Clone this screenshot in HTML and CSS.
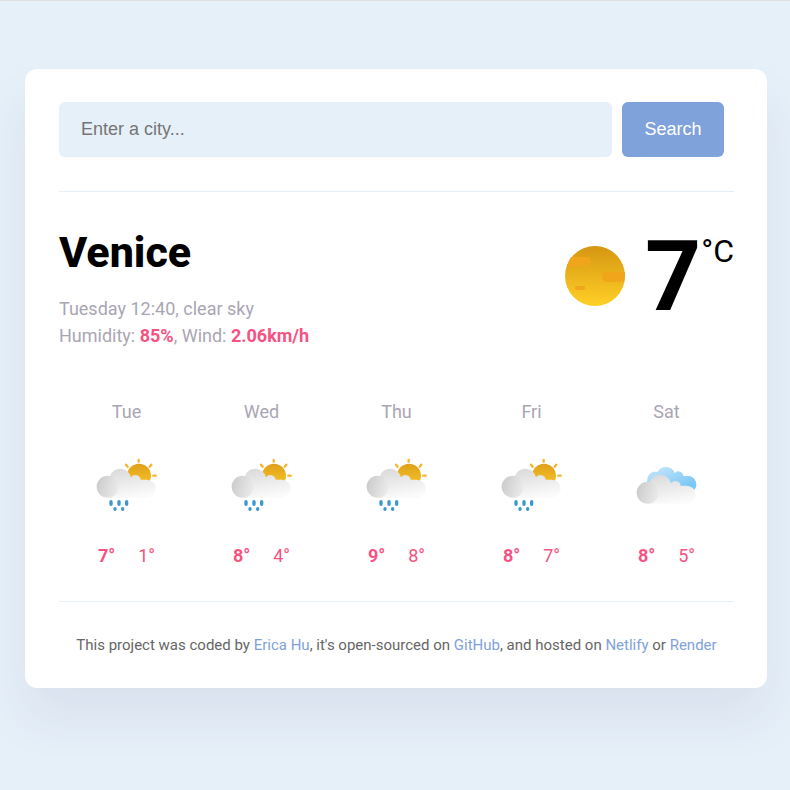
FILE: index.html
```html
<!DOCTYPE html>
<html lang="en">
<head>
    <meta charset="UTF-8">
    <meta name="viewport" content="width=device-width, initial-scale=1.0">
    <title>Weather App</title>
    <link rel="stylesheet" href="styles.css">
</head>
<body>
    <!-- Shared icons -->
    <svg class="icon-defs" aria-hidden="true">
        <defs>
            <linearGradient id="sunFill" x1="0" y1="0" x2="0" y2="1">
                <stop offset="0" stop-color="#d69612"/>
                <stop offset="1" stop-color="#ffd026"/>
            </linearGradient>
            <linearGradient id="smallSunFill" x1="0" y1="0" x2="0" y2="1">
                <stop offset="0" stop-color="#dea01b"/>
                <stop offset="1" stop-color="#fcc728"/>
            </linearGradient>
            <linearGradient id="cloudFill" gradientUnits="userSpaceOnUse" x1="90" y1="52" x2="105" y2="145">
                <stop offset="0" stop-color="#d9d9d9"/>
                <stop offset="1" stop-color="#fbfbfb"/>
            </linearGradient>
            <linearGradient id="puffFill" x1="0" y1="0.3" x2="1" y2="0.6">
                <stop offset="0" stop-color="#cbcbcb"/>
                <stop offset="1" stop-color="#ebebeb"/>
            </linearGradient>
            <linearGradient id="blueFill" gradientUnits="userSpaceOnUse" x1="110" y1="45" x2="140" y2="120">
                <stop offset="0" stop-color="#bde3fb"/>
                <stop offset="1" stop-color="#7ac8f5"/>
            </linearGradient>
        </defs>
        <symbol id="cloud" viewBox="0 0 225 210">
            <path d="M53 143 L59 80 A33 33 0 0 1 123 82 A16 16 0 0 1 152 89 L170 89 A27 27 0 0 1 170 143 Z" fill="url(#cloudFill)"/>
            <circle cx="53" cy="110" r="33" fill="url(#puffFill)"/>
        </symbol>
        <symbol id="rain" viewBox="-3 0 225 210">
            <circle cx="147" cy="77" r="36" fill="url(#smallSunFill)"/>
            <path d="M146 30V35M108 44L113 50M184 44L179 50M190 77H197" stroke="#f7b52c" stroke-width="7" stroke-linecap="round"/>
            <use href="#cloud" width="225" height="210"/>
            <path d="M63 155V163M87 155V163M110 155V163" stroke="#3a98cd" stroke-width="10" stroke-linecap="round"/>
            <path d="M75 176V178M98 176V178" stroke="#3a98cd" stroke-width="10" stroke-linecap="round"/>
        </symbol>
        <symbol id="clouds" viewBox="-3 0 225 210">
            <path d="M75 122 A25 25 0 0 1 52 90 A24 24 0 0 1 83 66 A28 28 0 0 1 134 69 A15 15 0 0 1 160 78 L174 78 A25 25 0 0 1 190 122 Z" fill="url(#blueFill)"/>
            <use href="#cloud" y="18" width="225" height="210"/>
        </symbol>
    </svg>

    <div class="weather-app">
        <header>
            <form class="search-form">
                <input type="search" class="search-input" placeholder="Enter a city..." aria-label="Enter a city" required>
                <button type="submit" class="search-button">Search</button>
            </form>
        </header>

        <main>
            <div class="current-weather">
                <div>
                    <h1 class="city">Venice</h1>
                    <p class="details">
                        Tuesday 12:40, clear sky<br>
                        Humidity: <strong>85%</strong>, Wind: <strong>2.06km/h</strong>
                    </p>
                </div>
                <div class="temperature">
                    <svg class="temperature-icon" viewBox="0 0 60 60" role="img" aria-label="clear sky">
                        <circle cx="30" cy="30" r="30" fill="url(#sunFill)"/>
                        <path d="M2 20 Q4 14 6 11 H21 Q26 11 26 16 Q26 20 21 20 Z M59 36 H41 Q37 35 37 31 Q37 26 42 26 H60 Q60 32 59 36 Z" fill="#f0a51b"/>
                        <rect x="10" y="40" width="10" height="4" rx="2" fill="#f0a51b"/>
                    </svg>
                    <div class="temperature-value">7</div>
                    <div class="temperature-unit">°C</div>
                </div>
            </div>

            <div class="forecast">
                <div class="forecast-day">
                    <div class="forecast-date">Tue</div>
                    <svg class="forecast-icon"><use href="#rain"/></svg>
                    <div class="forecast-temps"><strong>7°</strong><span>1°</span></div>
                </div>
                <div class="forecast-day">
                    <div class="forecast-date">Wed</div>
                    <svg class="forecast-icon"><use href="#rain"/></svg>
                    <div class="forecast-temps"><strong>8°</strong><span>4°</span></div>
                </div>
                <div class="forecast-day">
                    <div class="forecast-date">Thu</div>
                    <svg class="forecast-icon"><use href="#rain"/></svg>
                    <div class="forecast-temps"><strong>9°</strong><span>8°</span></div>
                </div>
                <div class="forecast-day">
                    <div class="forecast-date">Fri</div>
                    <svg class="forecast-icon"><use href="#rain"/></svg>
                    <div class="forecast-temps"><strong>8°</strong><span>7°</span></div>
                </div>
                <div class="forecast-day">
                    <div class="forecast-date">Sat</div>
                    <svg class="forecast-icon"><use href="#clouds"/></svg>
                    <div class="forecast-temps"><strong>8°</strong><span>5°</span></div>
                </div>
            </div>
        </main>

        <footer>
            This project was coded by <a href="#">Erica Hu</a>, it's open-sourced on <a href="#">GitHub</a>, and hosted on <a href="#">Netlify</a> or <a href="#">Render</a>
        </footer>
    </div>
</body>
</html>
```
FILE: styles.css
```css
* {
    box-sizing: border-box;
}

body {
    margin: 0;
    background-color: #e6f0f9;
    border-top: 1px solid #e0e0e0;
    font-family: Roboto, sans-serif;
}

.icon-defs {
    position: absolute;
    width: 0;
    height: 0;
}

.weather-app {
    max-width: 800px;
    margin: 68px 23px 68px 25px;
    padding: 33px 33px 32px 34px;
    background-color: #fff;
    border-radius: 12px;
    box-shadow: 0 30px 50px rgba(65, 50, 100, 0.08);
}

header {
    padding-bottom: 34px;
    border-bottom: 1px solid #e6f0f9;
}

.search-form {
    display: flex;
    gap: 10px;
    padding-right: 10px;
}

.search-input,
.search-button {
    height: 55px;
    padding: 0 22px;
    border: none;
    border-radius: 6px;
    font-family: "Liberation Sans", Arial, sans-serif;
    font-size: 18px;
}

.search-input {
    flex: 1;
    min-width: 0;
    background-color: #e6f0f9;
    appearance: none;
}

.search-button {
    min-width: 102px;
    background-color: #80a2da;
    color: #fff;
    cursor: pointer;
}

main {
    padding: 32px 0;
}

.current-weather {
    display: flex;
    justify-content: space-between;
}

.city {
    margin: 0;
    font-size: 43px;
    font-weight: 800;
    line-height: 56px;
}

.details {
    margin: 15px 0 0;
    color: #a9a6b3;
    font-size: 18px;
    line-height: 27px;
}

strong {
    font-weight: 700;
}

.details strong {
    color: #f65282;
}

.temperature {
    display: flex;
    align-items: flex-start;
}

.temperature-icon {
    width: 60px;
    height: 60px;
    margin: 22px 20px 0 0;
}

.temperature-value {
    font-size: 98px;
    font-weight: 700;
    line-height: 106px;
}

.temperature-unit {
    margin-top: 7px;
    font-size: 32px;
    line-height: 40px;
}

.forecast {
    display: grid;
    grid-template-columns: repeat(5, 1fr);
    margin-top: 45px;
    font-size: 18px;
    line-height: 27px;
    text-align: center;
}

.current-weather {
    min-height: 129px;
}

.forecast-date {
    color: #a9a6b3;
}

.forecast-icon {
    display: block;
    width: 75px;
    height: 70px;
    margin: 25px auto 22px;
}

.forecast-temps {
    display: flex;
    justify-content: center;
    gap: 23px;
    color: #f65282;
}

footer {
    padding-top: 33px;
    border-top: 1px solid #e6f0f9;
    color: #666;
    font-size: 15px;
    line-height: 21px;
    text-align: center;
}

footer a {
    color: #80a2da;
    text-decoration: none;
}
```
